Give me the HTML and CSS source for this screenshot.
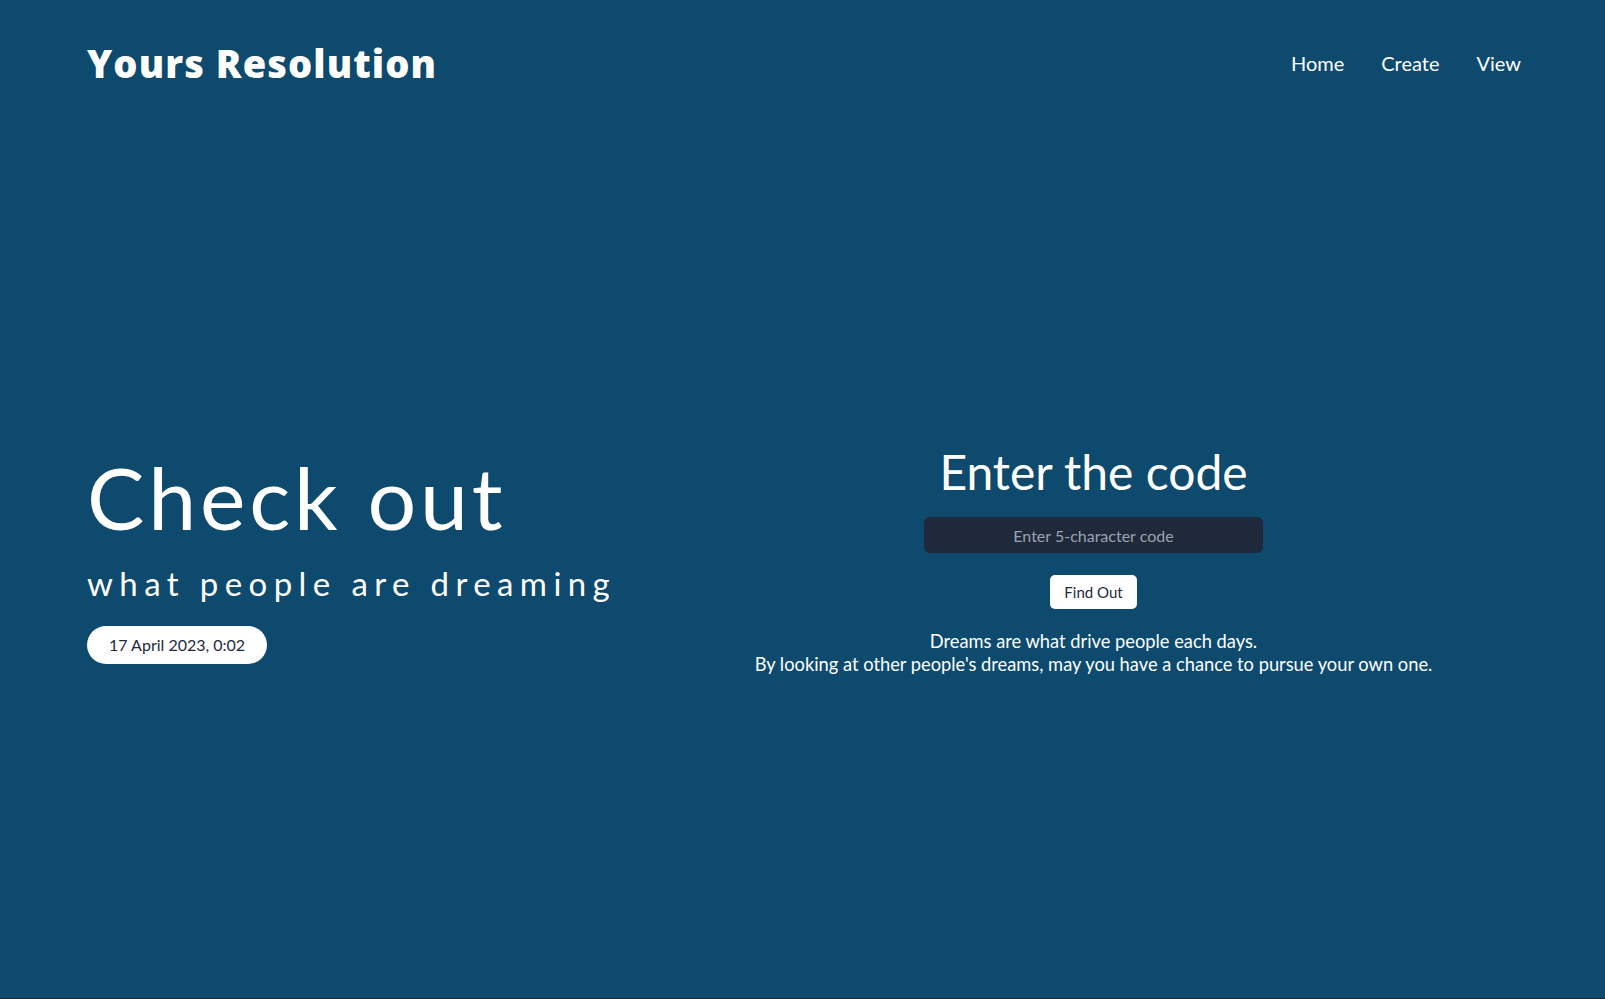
FILE: index.html
```html
<!DOCTYPE html>
<html lang="en">
<head>
<meta charset="utf-8">
<title>Yours Resolution</title>
<link rel="stylesheet" href="styles.css">
</head>
<body>
<div class="page">
  <header class="header">
    <a class="logo" href="#">Yours Resolution</a>
    <nav class="nav">
      <a href="#">Home</a>
      <a href="#">Create</a>
      <a href="#">View</a>
    </nav>
  </header>
  <main class="hero">
    <section class="hero-left">
      <h1 class="title">Check out</h1>
      <p class="subtitle">what people are dreaming</p>
      <span class="date-pill">17 April 2023, 0:02</span>
    </section>
    <section class="hero-right">
      <h2 class="code-title">Enter the code</h2>
      <input class="code-input" type="text" placeholder="Enter 5-character code">
      <button class="find-btn" type="button">Find Out</button>
      <p class="desc">Dreams are what drive people each days.<br>By looking at other people's dreams, may you have a chance to pursue your own one.</p>
    </section>
  </main>
</div>
</body>
</html>
```
FILE: styles.css
```css
html, body {
  margin: 0;
  padding: 0;
}
body {
  background: #2a2a2a;
  font-family: "Lato", "Open Sans", sans-serif;
  color: #ffffff;
}
.page {
  height: 998px;
  background: #0d4a6e;
  display: flex;
  flex-direction: column;
}
.header {
  display: flex;
  justify-content: space-between;
  align-items: center;
  padding: 20px 84px 20px 87px;
  height: 86px;
}
.logo {
  font-family: "Open Sans", sans-serif;
  font-weight: 800;
  font-size: 38px;
  color: #ffffff;
  text-decoration: none;
  letter-spacing: 1.1px;
}
.nav {
  display: flex;
  gap: 37px;
}
.nav a {
  color: #ffffff;
  text-decoration: none;
  font-size: 20px;
}
.hero {
  flex: 1;
  display: grid;
  grid-template-columns: 580px 1fr;
  align-items: center;
  padding: 0 85px 0 87px;
}
.hero-left {
  display: flex;
  flex-direction: column;
  align-items: flex-start;
}
.title {
  margin: 0;
  font-size: 86px;
  font-weight: 400;
  line-height: 0.86;
  letter-spacing: 3.8px;
}
.subtitle {
  margin: 30px 0 0;
  font-size: 33px;
  letter-spacing: 6.4px;
  line-height: 1.2;
}
.date-pill {
  margin-top: 22px;
  background: #ffffff;
  color: #1e293b;
  border-radius: 999px;
  padding: 0 22px;
  height: 38px;
  line-height: 38px;
  font-size: 16px;
}
.hero-right {
  display: flex;
  flex-direction: column;
  align-items: center;
  text-align: center;
}
.code-title {
  margin: 0;
  font-size: 48px;
  font-weight: 400;
  line-height: 0.95;
}
.code-input {
  margin-top: 23px;
  width: 339px;
  height: 36px;
  box-sizing: border-box;
  border: none;
  border-radius: 6px;
  background: #1e293b;
  color: #ffffff;
  text-align: center;
  font-family: inherit;
  font-size: 16px;
  outline: none;
}
.code-input::placeholder {
  color: #9ca3af;
}
.find-btn {
  margin-top: 22px;
  width: 87px;
  height: 34px;
  border: none;
  border-radius: 5px;
  background: #ffffff;
  color: #1e293b;
  font-family: inherit;
  font-size: 15px;
  cursor: pointer;
}
.desc {
  margin: 21px 0 0;
  font-size: 18.3px;
  line-height: 22.5px;
}
```
